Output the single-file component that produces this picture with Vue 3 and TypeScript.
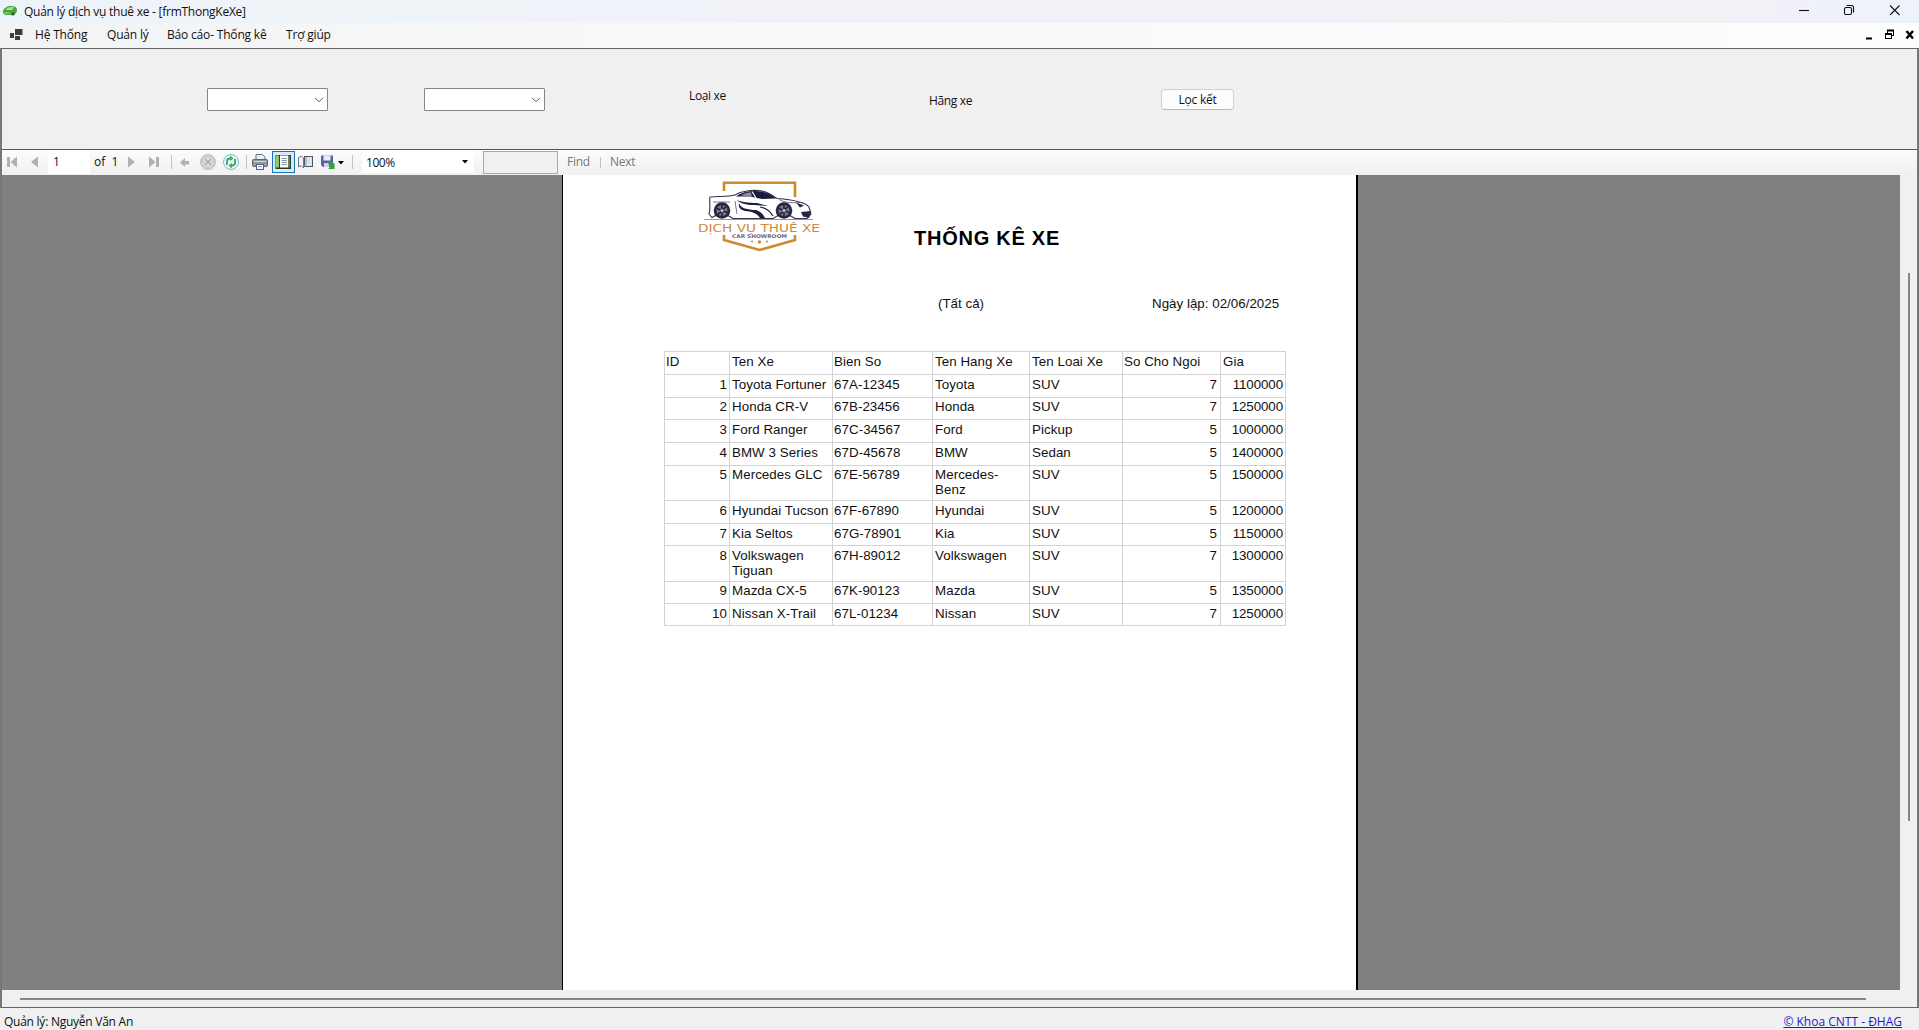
<script setup lang="ts">
interface Car {
  id: number
  name: string
  plate: string
  brand: string
  type: string
  seats: number
  price: number
  height: number
}

const menus: { label: string; width: number }[] = [
  { label: 'Hệ Thống', width: 72 },
  { label: 'Quản lý', width: 60 },
  { label: 'Báo cáo- Thống kê', width: 119 },
  { label: 'Trợ giúp', width: 60 },
]

const headers: string[] = ['ID', 'Ten Xe', 'Bien So', 'Ten Hang Xe', 'Ten Loai Xe', 'So Cho Ngoi', 'Gia']

const cars: Car[] = [
  { id: 1, name: 'Toyota Fortuner', plate: '67A-12345', brand: 'Toyota', type: 'SUV', seats: 7, price: 1100000, height: 23 },
  { id: 2, name: 'Honda CR-V', plate: '67B-23456', brand: 'Honda', type: 'SUV', seats: 7, price: 1250000, height: 22 },
  { id: 3, name: 'Ford Ranger', plate: '67C-34567', brand: 'Ford', type: 'Pickup', seats: 5, price: 1000000, height: 23 },
  { id: 4, name: 'BMW 3 Series', plate: '67D-45678', brand: 'BMW', type: 'Sedan', seats: 5, price: 1400000, height: 23 },
  { id: 5, name: 'Mercedes GLC', plate: '67E-56789', brand: 'Mercedes-Benz', type: 'SUV', seats: 5, price: 1500000, height: 35 },
  { id: 6, name: 'Hyundai Tucson', plate: '67F-67890', brand: 'Hyundai', type: 'SUV', seats: 5, price: 1200000, height: 23 },
  { id: 7, name: 'Kia Seltos', plate: '67G-78901', brand: 'Kia', type: 'SUV', seats: 5, price: 1150000, height: 22 },
  { id: 8, name: 'Volkswagen Tiguan', plate: '67H-89012', brand: 'Volkswagen', type: 'SUV', seats: 7, price: 1300000, height: 36 },
  { id: 9, name: 'Mazda CX-5', plate: '67K-90123', brand: 'Mazda', type: 'SUV', seats: 5, price: 1350000, height: 22 },
  { id: 10, name: 'Nissan X-Trail', plate: '67L-01234', brand: 'Nissan', type: 'SUV', seats: 7, price: 1250000, height: 22 },
]

const raisedRows: number[] = [2, 5, 9]
</script>

<template>
  <div class="window">
    <header class="titlebar">
      <svg class="app-icon" width="16" height="12" viewBox="0 0 16 12">
        <path d="M1 6 C2 3 5 1 9 1 C13 1 15 2.500 15 5 C15 8 13 9.500 10 10 L4 10 C1.500 9.500 .5 8 1 6Z" fill="#4aa53f" />
        <path d="M4 4 C6 2 9 1.500 12 2.200 L10 5 L4 5Z" fill="#a9dc98" />
        <path d="M1.500 7 L8 7.500 L9 9 L3 9Z" fill="#7bcb68" />
        <circle cx="11" cy="9" r="1.500" fill="#24502a" />
      </svg>
      <span class="title">Quản lý dịch vụ thuê xe - [frmThongKeXe]</span>
      <svg class="win-controls" width="110" height="20" viewBox="0 0 110 20" fill="none" stroke="#111" stroke-width="1.1">
        <path d="M4 10.500H14" />
        <rect x="49.500" y="7.500" width="7" height="7" rx="1.500" />
        <path d="M51.500 5.500H56.500Q58.500 5.500 58.500 7.500V12.500" />
        <path d="M95 5.500L104.500 15M104.500 5.500L95 15" />
      </svg>
    </header>

    <nav class="menubar">
      <svg class="mdi-icon" width="13" height="12" viewBox="0 0 13 12" fill="#3c3c3c">
        <rect x="0" y="4" width="4" height="5" />
        <rect x="5" y="0" width="7.500" height="6" />
        <rect x="5" y="7" width="5" height="4" />
      </svg>
      <span v-for="m in menus" :key="m.label" class="menu" :style="{ width: m.width + 'px' }">{{ m.label }}</span>
      <svg class="mdi-controls" width="52" height="12" viewBox="0 0 52 12" fill="none" stroke="#000">
        <path d="M2 9.500H8" stroke-width="2" />
        <path d="M23.500 4V1.500H29.500V6.500H28" />
        <path d="M23 1.500H30" stroke-width="2" />
        <rect x="21.500" y="4.500" width="6" height="5" />
        <path d="M21 5H28" stroke-width="2" />
        <path d="M42.500 2L49 9.500M49 2L42.500 9.500" stroke-width="2.400" />
      </svg>
    </nav>

    <main class="mdi-child">
      <section class="filters">
        <div class="combo first">
          <svg width="10" height="6" viewBox="0 0 10 6" fill="none" stroke="#555"><path d="M1 .8L5 4.800L9 .8" /></svg>
        </div>
        <div class="combo second">
          <svg width="10" height="6" viewBox="0 0 10 6" fill="none" stroke="#555"><path d="M1 .8L5 4.800L9 .8" /></svg>
        </div>
        <span class="label type">Loại xe</span>
        <span class="label brand">Hãng xe</span>
        <button class="filter-button">Lọc kết</button>
      </section>

      <section class="toolbar">
        <svg class="nav-icons" width="45" height="24" viewBox="3 150 45 24" fill="#b1b1b1">
          <path d="M7 157h3v10h-3zM17 156.500v11L10.500 162z" />
          <path d="M38 156.500v11L31 162z" />
        </svg>
        <span class="page-input">1</span>
        <span class="page-total">of&nbsp; 1</span>
        <svg width="244" height="24" viewBox="118 150 244 24">
          <g fill="#b1b1b1">
            <path d="M128 156.500v11L135 162z" />
            <path d="M149 156.500v11L155.500 162zM156 157h3v10h-3z" />
            <path d="M180 162.500L185 158V161H189V164.500H185V167z" />
          </g>
          <path d="M171.500 155V169M246.500 155V169M352.500 155V169" stroke="#c3c3c3" />
          <circle cx="208" cy="162" r="7.500" fill="#cfcfcf" stroke="#bcbcbc" />
          <path d="M204.800 158.800L211.200 165.200M211.200 158.800L204.800 165.200" stroke="#e6e6e6" stroke-width="3.500" />
          <path d="M205 159L211 165M211 159L205 165" stroke="#a8a8a8" stroke-width="1.700" />
          <circle cx="231" cy="162" r="7.500" fill="#e7f5fb" stroke="#84b8d6" />
          <path d="M227 165V161Q227 158.500 230.500 158.500" fill="none" stroke="#3aa85c" stroke-width="1.800" />
          <path d="M230 155.500L233.500 158.500L230 161z" fill="#3aa85c" />
          <path d="M235 159V163Q235 165.500 231.500 165.500" fill="none" stroke="#3aa85c" stroke-width="1.800" />
          <path d="M232 163L228.500 165.500L232 168.500z" fill="#3aa85c" />
          <!-- printer -->
          <path d="M256 160V154.500H262.500L265 157V160" fill="#e9f0f7" stroke="#65717e" />
          <rect x="252.500" y="159.500" width="15" height="7" rx="1" fill="#8f979f" stroke="#5c646c" />
          <path d="M254 161.500H266" stroke="#d4d9de" />
          <rect x="256.500" y="164.500" width="7" height="5" fill="#fff" stroke="#53667a" />
          <path d="M258 166.500H262" stroke="#7aa4cf" />
          <!-- print layout toggle -->
          <rect x="272.500" y="151.500" width="22" height="21" fill="#d6eaf8" stroke="#1a73b5" />
          <rect x="275.500" y="155" width="15.500" height="14" fill="#2b3b34" />
          <rect x="276" y="155.500" width="3" height="12" fill="#8fc878" />
          <rect x="280" y="155.500" width="8" height="12" fill="#fff" />
          <path d="M281.500 158.500H287M281.500 160.500H287M281.500 162.500H287M281.500 164.500H287" stroke="#8799a5" />
          <rect x="288" y="155.500" width="2" height="12" fill="#638564" />
          <!-- page setup -->
          <path d="M298.500 157.500L301.500 156L303.500 158V168L301 165.500L298.500 167z" fill="#eef2f6" stroke="#6d7883" />
          <rect x="304.500" y="156.500" width="8" height="10" fill="#dce4ec" stroke="#4d5863" />
          <path d="M303.500 167L306 164.500V157" fill="none" stroke="#8b98a5" />
          <!-- export -->
          <path d="M321 155.500H333V167H323L321 165z" fill="#5a61ad" />
          <rect x="323.500" y="155.500" width="7" height="5" fill="#e9edfa" />
          <rect x="324" y="163" width="5" height="4" fill="#ccd2ee" />
          <path d="M327.500 162L330 161L332.500 164L334.500 162.500V169H328L330 167z" fill="#36a136" />
          <path d="M338 161h6l-3 3.500z" fill="#000" />
        </svg>
        <div class="zoom-combo">
          <span>100%</span>
          <svg width="6" height="4" viewBox="0 0 6 4"><path d="M0 0h6L3 3.500z" /></svg>
        </div>
        <span class="find-input"></span>
        <span class="find">Find</span>
        <i class="divider"></i>
        <span class="next">Next</span>
      </section>

      <div class="viewer">
        <div class="canvas">
          <article class="page">
            <div class="page-head">
              <svg class="logo" width="130" height="78" viewBox="692 175 130 78">
                <g fill="none" stroke="#cf8a2e" stroke-width="2.600">
                  <path d="M724 191V182.800H795V197" />
                  <path d="M724 235V240L759.500 250L795 240V235" />
                </g>
                <!-- body -->
                <path d="M710 197C718 196 728 197 735 195C741 191 752 189.500 762 191C769 192.500 773 196 777 198.500C791 199.500 805 202 809 207L811 214L807 218.500H795L784 212L773 218.500H733L722 212L712 217.500L709 214C711 208 709 202 710 197Z" fill="#fff" stroke="#2f2f4a" stroke-width="1.100" />
                <!-- glass -->
                <path d="M736 196.500C742 191.500 753 190 762 191.500C769 193 773 196 776 198.500L762 199L750 196.500Z" fill="#1c1c40" />
                <path d="M741 195.500C745 193 748 192.500 751 192.500L752 196.500Z" fill="#8c8ca0" />
                <path d="M752 191.500L756 198" stroke="#fff" stroke-width="1.200" />
                <!-- side intake and sill -->
                <path d="M737 200C741 202 748 203 757 203L768 206L754 205C746 205 740 203.500 737 200Z" fill="#1c1c40" />
                <path d="M739 203C740 208 748 210 756 210C760 211 763 214 765 218H760C757 213 751 211.500 745 211C740 209.500 738 207 739 203Z" fill="#1c1c40" />
                <path d="M760 207C766 208 770 211 773 216" fill="none" stroke="#1c1c40" stroke-width="1.200" />
                <path d="M779 199.500C785 203 793 203 801 202.500M713 202H730M735 201L737 214" fill="none" stroke="#55556c" stroke-width=".8" />
                <path d="M796 202.500L804 205.500L800 207.500ZM801 212L811 211L809 218L803 216.500Z" fill="#252540" />
                <path d="M704 219.500H813" stroke="#7d7d92" stroke-width=".8" />
                <g v-for="cx in [722, 784]" :key="cx">
                  <circle :cx="cx" cy="210.500" r="8.300" fill="#26263f" />
                  <circle :cx="cx" cy="210.500" r="5.500" fill="#777789" />
                  <path :d="`M${cx} 205V216M${cx - 5} 208.500L${cx + 5} 212.500M${cx - 4} 214.500L${cx + 4} 206.500`" stroke="#1c1c35" stroke-width="1.500" />
                  <circle :cx="cx" cy="210.500" r="1.500" fill="#c8c8d0" />
                </g>
                <text x="698" y="231.500" class="logo-name" textLength="122" lengthAdjust="spacingAndGlyphs">DỊCH VỤ THUÊ XE</text>
                <text x="732" y="238" class="logo-sub" textLength="55" lengthAdjust="spacingAndGlyphs">CAR SHOWROOM</text>
                <g fill="#cf8a2e">
                  <circle cx="752" cy="241.500" r="1.100" />
                  <circle cx="759.500" cy="242" r="1.700" />
                  <circle cx="767" cy="241.500" r="1.100" />
                </g>
              </svg>
              <h1>THỐNG KÊ XE</h1>
            </div>
            <div class="page-meta">
              <span class="scope">(Tất cả)</span>
              <span class="date">Ngày lập: 02/06/2025</span>
            </div>
            <table>
              <colgroup>
                <col style="width: 65px" /><col style="width: 103px" /><col style="width: 100px" /><col style="width: 97px" />
                <col style="width: 93px" /><col style="width: 98px" /><col style="width: 65px" />
              </colgroup>
              <tbody>
                <tr class="head">
                  <td v-for="h in headers" :key="h">{{ h }}</td>
                </tr>
                <tr v-for="c in cars" :key="c.id" :class="{ raised: raisedRows.includes(c.id) }" :style="{ height: c.height + 'px' }">
                  <td class="num">{{ c.id }}</td>
                  <td>{{ c.name }}</td>
                  <td>{{ c.plate }}</td>
                  <td class="brand-cell">{{ c.brand }}</td>
                  <td>{{ c.type }}</td>
                  <td class="num">{{ c.seats }}</td>
                  <td class="num price">{{ c.price }}</td>
                </tr>
              </tbody>
            </table>
          </article>
        </div>
        <div class="vscroll"><i></i></div>
      </div>
      <div class="hscroll"><i></i></div>
    </main>

    <footer class="statusbar">
      <span class="user">Quản lý: Nguyễn Văn An</span>
      <a class="link">© Khoa CNTT - ĐHAG</a>
    </footer>
  </div>
</template>

<style>
body {
  margin: 0;
  overflow: hidden;
}
</style>

<style scoped>
* {
  box-sizing: border-box;
}
.window {
  width: 1919px;
  height: 1030px;
  display: flex;
  flex-direction: column;
  background: #f0f0f0;
  color: #111;
  font: 12px/16px 'Open Sans', 'Noto Sans', sans-serif;
  letter-spacing: -0.25px;
  white-space: nowrap;
}
svg {
  display: block;
  flex: none;
}
.titlebar {
  height: 23px;
  flex: none;
  display: flex;
  background: linear-gradient(90deg, #edf4f9, #f1f2f8 50%, #f3f1f6 88%, #edf2fb);
}
.app-icon {
  margin: 5px 0 0 2px;
}
.title {
  margin: 4px 0 0 6px;
}
.win-controls {
  margin-left: auto;
  margin-right: 14px;
}
.menubar {
  height: 25px;
  flex: none;
  display: flex;
  background: linear-gradient(90deg, #f2f3f5, #f8f8f8 30%, #fdfdfd);
}
.mdi-icon {
  margin: 6px 12px 0 10px;
}
.menu {
  margin-top: 4px;
  flex: none;
  letter-spacing: -0.18px;
}
.mdi-controls {
  margin: 6px 3px 0 auto;
}
.mdi-child {
  height: 960px;
  flex: none;
  display: flex;
  flex-direction: column;
  border: 1px solid #646464;
  border-left: 2px solid #777;
  border-right: 2px solid #777;
}
.filters {
  height: 100px;
  flex: none;
  display: flex;
  align-items: flex-start;
}
.combo {
  width: 121px;
  height: 23px;
  margin-top: 39px;
  padding-right: 3px;
  display: flex;
  align-items: center;
  justify-content: flex-end;
  background: #fff;
  border: 1px solid #858585;
  border-radius: 1px;
}
.first {
  margin-left: 205px;
}
.second {
  margin-left: 96px;
}
.label {
  letter-spacing: -0.35px;
}
.label.type {
  width: 240px;
  margin: 39px 0 0 144px;
}
.label.brand {
  width: 232px;
  margin-top: 44px;
}
.filter-button {
  width: 73px;
  height: 21px;
  margin-top: 40px;
  padding: 0;
  background: #fdfdfd;
  border: 1px solid #d0d0d0;
  border-bottom-color: #bababa;
  border-radius: 4px;
  font: inherit;
  color: inherit;
  letter-spacing: inherit;
}
.toolbar {
  height: 26px;
  flex: none;
  display: flex;
  border-top: 1px solid #555;
  background: linear-gradient(#fcfcfc, #f0f0f0);
}
.nav-icons {
  margin-left: 1px;
}
.page-input {
  width: 42px;
  height: 24px;
  padding: 4px 5px;
  background: #fff;
}
.page-total {
  width: 28px;
  padding: 4px 0 0 4px;
  letter-spacing: 0;
}
.zoom-combo {
  width: 112px;
  height: 23px;
  padding: 0 6px 0 4px;
  display: flex;
  align-items: center;
  justify-content: space-between;
  background: #fff;
}
.zoom-combo span {
  padding-top: 2px;
  letter-spacing: -0.45px;
}
.find-input {
  width: 75px;
  height: 23px;
  margin: 1px 0 0 9px;
  border: 1px solid #a8a8a8;
  background: #f0f0f0;
}
.find,
.next {
  padding-top: 4px;
  color: #777;
}
.find {
  width: 33px;
  margin-left: 9px;
}
.divider {
  width: 1px;
  height: 11px;
  margin: 7px 9px 0 0;
  background: #c3c3c3;
}
.viewer {
  height: 815px;
  flex: none;
  display: flex;
}
.canvas {
  width: 1898px;
  background: #808080;
}
.page {
  width: 796px;
  height: 815px;
  margin-left: 560px;
  border-left: 1px solid #000;
  border-right: 2px solid #000;
  background: #fff;
  font-family: 'Liberation Sans', Arial, sans-serif;
}
.page-head {
  height: 121px;
  display: flex;
}
.logo {
  margin-left: 129px;
}
.logo-name {
  font: 11px 'DejaVu Sans', sans-serif;
  letter-spacing: 0;
  fill: #d0893a;
}
.logo-sub {
  font: bold 5px 'DejaVu Sans', sans-serif;
  letter-spacing: 0;
  fill: #6a6a80;
}
h1 {
  margin: 51px 0 0 92px;
  color: #000;
  font-size: 20px;
  line-height: 24px;
  letter-spacing: 0.75px;
}
.page-meta {
  height: 55px;
  display: flex;
  font-size: 13.33px;
  letter-spacing: 0.02px;
}
.scope {
  width: 214px;
  margin-left: 375px;
}
table {
  width: 622px;
  margin-left: 101px;
  table-layout: fixed;
  border-collapse: collapse;
  font-size: 13.33px;
  line-height: 15px;
  letter-spacing: 0.06px;
  white-space: normal;
}
tr.head {
  height: 23px;
}
td {
  padding: 2px 0 0 2px;
  border: 1px solid #d3d3d3;
  vertical-align: top;
}
td:nth-child(1),
td:nth-child(3),
td:nth-child(6) {
  padding-left: 1px;
}
td.brand-cell {
  padding-right: 6px;
}
td.num {
  padding: 2px 2px 0 0;
  text-align: right;
}
td:nth-child(6).num {
  padding-right: 3px;
}
td.price {
  letter-spacing: -0.08px;
}
tr.raised td {
  padding-top: 1px;
}
td:nth-child(6) {
  border-left-color: #bcbcbc;
}
.vscroll {
  width: 17px;
  padding: 98px 0 0 8px;
}
.vscroll i {
  display: block;
  width: 2px;
  height: 548px;
  background: #858585;
}
.hscroll {
  height: 17px;
  padding: 8px 0 0 18px;
}
.hscroll i {
  display: block;
  width: 1846px;
  height: 2px;
  background: #858585;
}
.statusbar {
  flex: 1;
  display: flex;
  justify-content: space-between;
  padding: 6px 17px 0 4px;
}
.link {
  color: #1a1acb;
  letter-spacing: 0;
  text-decoration: underline;
}
</style>
